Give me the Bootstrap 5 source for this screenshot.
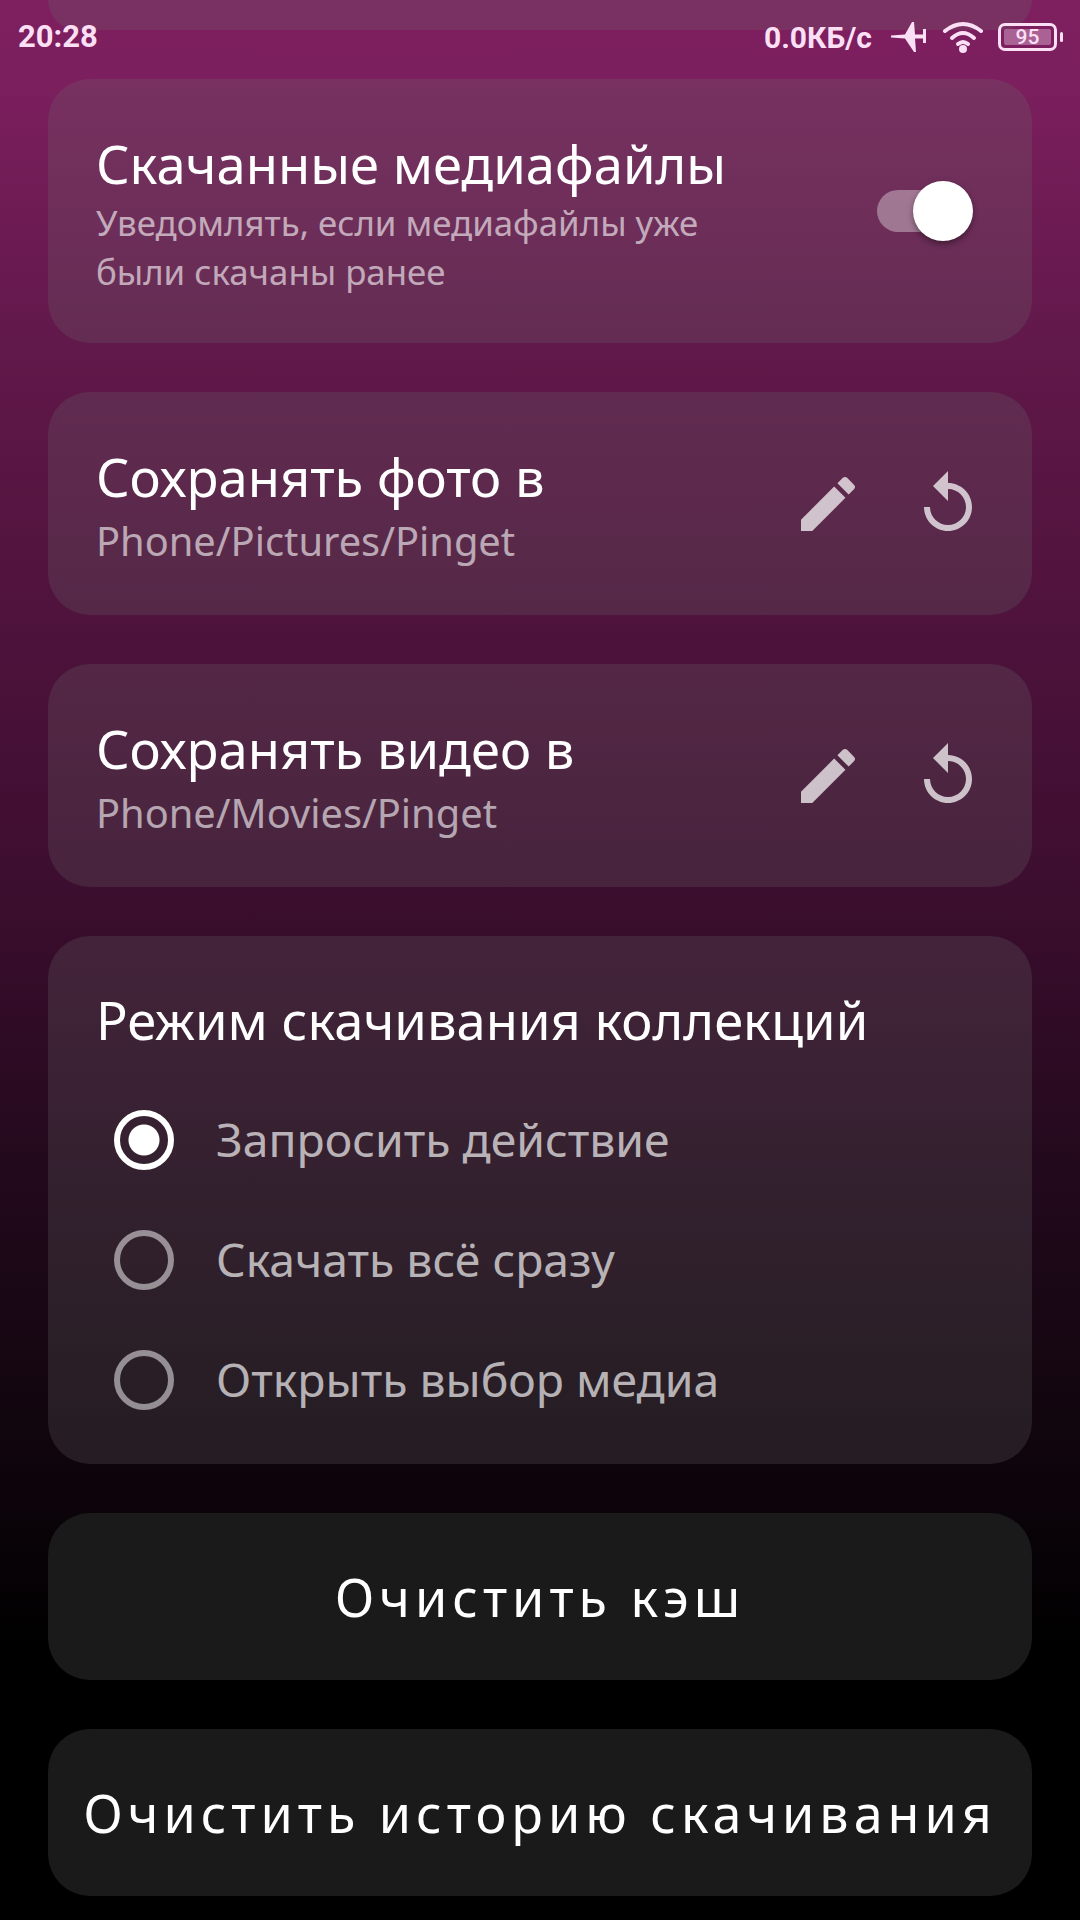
<!doctype html>
<html lang="ru">

<head>
    <meta charset="utf-8">
    <meta name="viewport" content="width=device-width, initial-scale=1">
    <title>Настройки</title>
    <link href="https://cdn.jsdelivr.net/npm/bootstrap@5.3.0/dist/css/bootstrap.min.css" rel="stylesheet">
    <style>
        html, body {
            height: 1920px;
            overflow: hidden;
        }

        body {
            background: linear-gradient(to bottom, #7e1f60 0%, #7c1f5e 4%, #61184a 18%, #3e0e30 45%, #21091b 62%, #0c040a 78%, #000 86%, #000 100%);
            font-family: "Noto Sans", "Open Sans", sans-serif;
            color: #fff;
        }

        .status-bar {
            position: absolute;
            top: 0;
            left: 0;
            right: 0;
            height: 74px;
            padding: 0 23px 0 18px;
            font-family: Roboto, sans-serif;
            font-weight: 700;
            font-size: 30px;
            color: #fbdff5;
        }

        .clock {
            font-size: 31px;
        }

        .plane {
            margin-left: 18px;
        }

        .batt {
            width: 59px;
            height: 28px;
            margin-left: 14px;
            border: 3px solid #fbdff5;
            border-radius: 7px;
            padding: 3px;
            position: relative;
        }

        .batt-fill {
            height: 100%;
            background: rgba(251, 223, 245, .35);
            border-radius: 2px;
            font-size: 21px;
            font-weight: 500;
            line-height: 16px;
            text-align: center;
        }

        .batt-tip {
            position: absolute;
            right: -9px;
            top: 6px;
            width: 3px;
            height: 10px;
            background: #fbdff5;
            border-radius: 2px;
        }

        .page {
            padding: 0 48px;
            display: flex;
            flex-direction: column;
            gap: 49px;
        }

        .panel {
            background: rgba(110, 110, 110, .24);
            border-radius: 42px;
            padding: 0 48px;
        }

        .panel-top {
            height: 30px;
            border-radius: 0 0 42px 42px;
        }

        .panel-media {
            height: 264px;
        }

        .panel-path {
            height: 223px;
        }

        .panel-mode {
            height: 528px;
            padding-top: 54px;
        }

        .media-text {
            padding-top: 8px;
        }

        .path-text {
            padding-top: 4px;
        }

        .title {
            font-size: 52.5px;
            line-height: 60px;
            margin: 0;
        }

        .sub {
            font-size: 34.8px;
            line-height: 49px;
            color: rgba(255, 255, 255, .6);
            margin: 4px 0 0;
        }

        .path-line {
            font-size: 39.8px;
            line-height: 48px;
            margin-top: 10px;
        }

        .toggle {
            position: relative;
            width: 96px;
            height: 42px;
            margin-right: 11px;
        }

        .toggle-track {
            position: absolute;
            left: 0;
            top: 0;
            width: 70px;
            height: 42px;
            border-radius: 21px;
            background: rgba(255, 255, 255, .35);
        }

        .toggle-thumb {
            position: absolute;
            right: 0;
            top: -9px;
            width: 60px;
            height: 60px;
            border-radius: 50%;
            background: #fff;
            box-shadow: 0 3px 6px rgba(0, 0, 0, .4);
        }

        .tool-icon {
            width: 72px;
            height: 72px;
            fill: rgba(255, 255, 255, .72);
        }

        .mode-list {
            margin-top: 30px;
        }

        .mode-row {
            height: 120px;
            padding-left: 18px;
            margin: 0;
            gap: 42px;
        }

        .mode-row .form-check-input {
            float: none;
            width: 60px;
            height: 60px;
            margin: 0;
            flex-shrink: 0;
            background: transparent;
            border: 6px solid rgba(255, 255, 255, .5);
        }

        .mode-row .form-check-input:checked {
            border-color: #fff;
            background: radial-gradient(circle, #fff 0, #fff 15px, transparent 16px);
        }

        .mode-row .form-check-label {
            font-size: 46.3px;
            color: rgba(255, 255, 255, .68);
        }

        .big-btn {
            height: 167px;
            border: 0;
            border-radius: 42px;
            background: #1a1a1a;
            color: #fff;
            font-size: 52px;
            letter-spacing: 5px;
            white-space: nowrap;
        }

        .big-btn:hover {
            background: #222;
            color: #fff;
        }
    </style>
</head>

<body>
    <div class="status-bar d-flex align-items-center justify-content-between">
        <div class="clock">20:28</div>
        <div class="d-flex align-items-center">
            <span>0.0КБ/с</span>
            <svg class="plane" width="36" height="32" viewBox="0 0 36 32" fill="#fbdff5">
                <path d="M1 14.500 L15 13.500 L22 1 L24 1 L25 13.500 L33 13.500 L33 8 L36 8 L36 22 L33 22 L33 17.500 L25 17.500 L26 31 L24 31 L15 17.500 L1 16.500z"/>
            </svg>
            <svg class="ms-3" width="42" height="32" viewBox="0 0 42 32" fill="none" stroke="#fbdff5" stroke-width="4" stroke-linecap="round">
                <path d="M3 10 Q21 -4 39 10"/>
                <path d="M10 17 Q21 7 32 17"/>
                <path d="M16 23 Q21 19 26 23"/>
                <circle cx="21" cy="28" r="2" fill="#fbdff5"/>
            </svg>
            <div class="batt">
                <div class="batt-fill">95</div>
                <div class="batt-tip"></div>
            </div>
        </div>
    </div>

    <div class="page">
        <div class="panel panel-top"></div>

        <div class="panel panel-media d-flex align-items-center justify-content-between">
            <div class="media-text">
                <p class="title">Скачанные медиафайлы</p>
                <p class="sub">Уведомлять, если медиафайлы уже<br>были скачаны ранее</p>
            </div>
            <div class="toggle">
                <div class="toggle-track"></div>
                <div class="toggle-thumb"></div>
            </div>
        </div>

        <div class="panel panel-path d-flex align-items-center justify-content-between">
            <div class="path-text">
                <p class="title">Сохранять фото в</p>
                <div class="sub path-line">Phone/Pictures/Pinget</div>
            </div>
            <div class="d-flex gap-5">
                <svg class="tool-icon" viewBox="0 0 24 24"><path d="M3 17.25V21h3.750L17.810 9.940l-3.750-3.750L3 17.250zM20.710 7.040c.39-.39.39-1.020 0-1.410l-2.340-2.340c-.39-.39-1.020-.39-1.410 0l-1.830 1.830 3.750 3.750 1.830-1.830z"/></svg>
                <svg class="tool-icon" viewBox="0 0 24 24"><path d="M12 5V1L7 6l5 5V7c3.310 0 6 2.690 6 6s-2.690 6-6 6-6-2.690-6-6H4c0 4.420 3.580 8 8 8s8-3.580 8-8-3.580-8-8-8z"/></svg>
            </div>
        </div>

        <div class="panel panel-path d-flex align-items-center justify-content-between">
            <div class="path-text">
                <p class="title">Сохранять видео в</p>
                <div class="sub path-line">Phone/Movies/Pinget</div>
            </div>
            <div class="d-flex gap-5">
                <svg class="tool-icon" viewBox="0 0 24 24"><path d="M3 17.25V21h3.750L17.810 9.940l-3.750-3.750L3 17.250zM20.710 7.040c.39-.39.39-1.020 0-1.410l-2.340-2.340c-.39-.39-1.020-.39-1.410 0l-1.830 1.830 3.750 3.750 1.830-1.830z"/></svg>
                <svg class="tool-icon" viewBox="0 0 24 24"><path d="M12 5V1L7 6l5 5V7c3.310 0 6 2.690 6 6s-2.690 6-6 6-6-2.690-6-6H4c0 4.420 3.580 8 8 8s8-3.580 8-8-3.580-8-8-8z"/></svg>
            </div>
        </div>

        <div class="panel panel-mode">
            <p class="title">Режим скачивания коллекций</p>
            <div class="mode-list">
                <div class="form-check mode-row d-flex align-items-center">
                    <input class="form-check-input" type="radio" name="mode" id="m1" checked>
                    <label class="form-check-label" for="m1">Запросить действие</label>
                </div>
                <div class="form-check mode-row d-flex align-items-center">
                    <input class="form-check-input" type="radio" name="mode" id="m2">
                    <label class="form-check-label" for="m2">Скачать всё сразу</label>
                </div>
                <div class="form-check mode-row d-flex align-items-center">
                    <input class="form-check-input" type="radio" name="mode" id="m3">
                    <label class="form-check-label" for="m3">Открыть выбор медиа</label>
                </div>
            </div>
        </div>

        <button class="btn big-btn" type="button">Очистить кэш</button>
        <button class="btn big-btn" type="button">Очистить историю скачивания</button>
    </div>

    <script src="https://cdn.jsdelivr.net/npm/bootstrap@5.3.0/dist/js/bootstrap.bundle.min.js"></script>
</body>

</html>
